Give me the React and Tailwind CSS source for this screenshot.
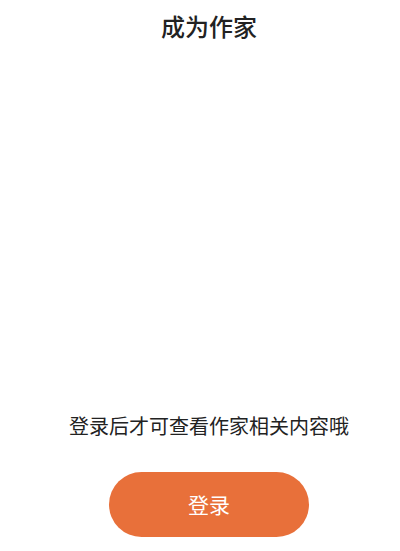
export default function App() {
  return (
    <div
      className="flex h-[551px] w-[400px] flex-col items-center bg-white pl-[18px] text-[#222222]"
      style={{ fontFamily: '"Noto Sans CJK SC", "Noto Sans", sans-serif' }}
    >
      {/* Header */}
      <h1 className="pt-[14px] text-[24px] font-medium leading-[24px] text-[#222222]">成为作家</h1>

      <div className="flex-1" />

      {/* Login prompt */}
      <p className="text-[20px] leading-[20px]">登录后才可查看作家相关内容哦</p>

      <button className="mt-[36px] mb-[14px] flex h-[65px] w-[200px] items-center justify-center rounded-full bg-[#E8703A] text-[21px] text-white">
        登录
      </button>
    </div>
  );
}
